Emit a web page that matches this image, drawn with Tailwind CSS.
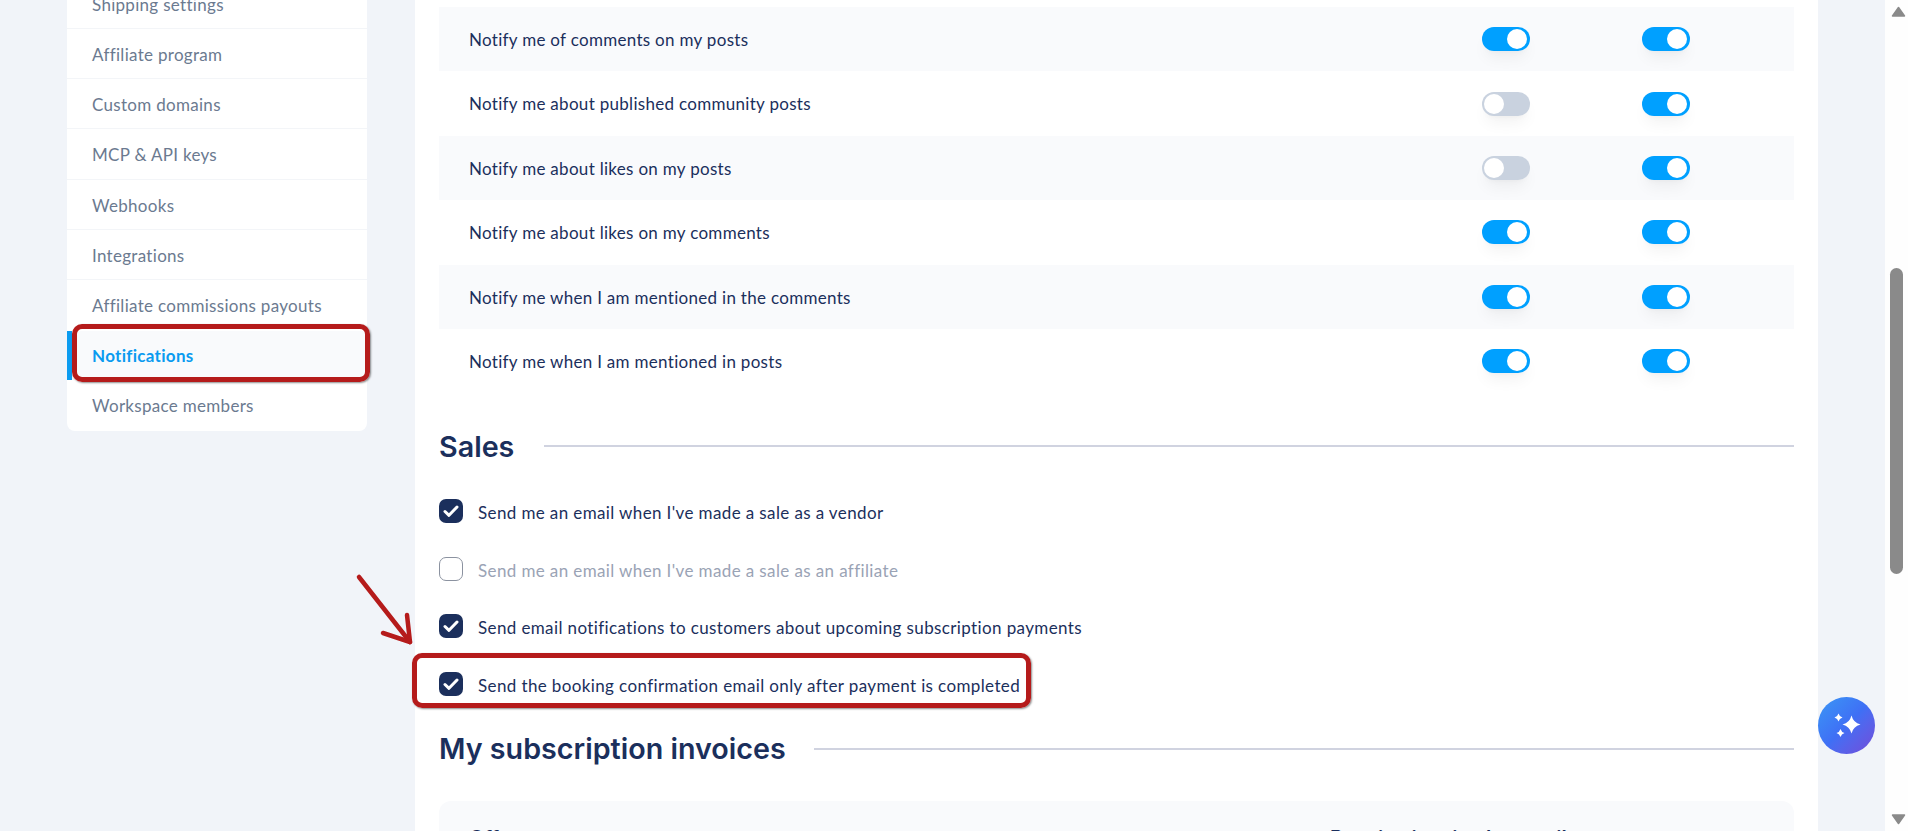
<!DOCTYPE html>
<html lang="en">

<head>
  <meta charset="UTF-8" />
  <title>Notifications</title>
  <script src="https://cdn.jsdelivr.net/npm/@tailwindcss/browser@4"></script>
</head>

<body class="h-screen overflow-hidden flex bg-[#f1f4f9] text-[#1b2f5c] font-['Lato',sans-serif] text-[17px] tracking-[0.3px]">
  <div class="relative flex-1 flex h-[831px] overflow-hidden">

    <!-- sidebar -->
    <aside class="w-[300px] ml-[67px] mt-[-21px] h-[452px] bg-white rounded-b-lg text-[#6b7a90] shrink-0 flex flex-col">
      <div class="h-[50px] flex items-center pl-[25px] pt-[2px] border-b border-[#f3f5f8]">Shipping settings</div>
      <div class="h-[50px] flex items-center pl-[25px] pt-[2px] border-b border-[#f3f5f8]">Affiliate program</div>
      <div class="h-[50px] flex items-center pl-[25px] pt-[2px] border-b border-[#f3f5f8]">Custom domains</div>
      <div class="h-[51px] flex items-center pl-[25px] pt-px border-b border-[#f3f5f8]">MCP &amp; API keys</div>
      <div class="h-[50px] flex items-center pl-[25px] pt-[2px] border-b border-[#f3f5f8]">Webhooks</div>
      <div class="h-[50px] flex items-center pl-[25px] pt-[2px] border-b border-[#f3f5f8]">Integrations</div>
      <div class="h-[51px] flex items-center pl-[25px]">Affiliate commissions payouts</div>
      <div class="h-[49px] flex items-center pl-[20px] border-l-[5px] border-[#0a9bf0] bg-[#f9fafc] text-[#0a9bf0] font-bold">Notifications</div>
      <div class="h-[51px] flex items-center pl-[25px]">Workspace members</div>
    </aside>

    <!-- main panel -->
    <main class="w-[1403px] ml-[48px] bg-white px-[24px] pt-[7px] shrink-0">
      <div>
        <div class="h-[64.4px] flex items-center bg-[#f9fafc] pl-[30px]">
          <span class="w-[1013px] pt-px">Notify me of comments on my posts</span>
          <span class="w-[48px] h-[24px] rounded-full bg-[#00a0ff] flex items-center justify-end pr-[3px] shadow-lg shadow-black/5"><i class="w-[20px] h-[20px] rounded-full bg-white"></i></span>
          <span class="w-[48px] h-[24px] ml-[112px] rounded-full bg-[#00a0ff] flex items-center justify-end pr-[3px] shadow-lg shadow-black/5"><i class="w-[20px] h-[20px] rounded-full bg-white"></i></span>
        </div>
        <div class="h-[64.4px] flex items-center pl-[30px]">
          <span class="w-[1013px] pt-px">Notify me about published community posts</span>
          <span class="w-[48px] h-[24px] rounded-full bg-[#c9d2df] flex items-center pl-[2px] shadow-lg shadow-black/5"><i class="w-[20px] h-[20px] rounded-full bg-white"></i></span>
          <span class="w-[48px] h-[24px] ml-[112px] rounded-full bg-[#00a0ff] flex items-center justify-end pr-[3px] shadow-lg shadow-black/5"><i class="w-[20px] h-[20px] rounded-full bg-white"></i></span>
        </div>
        <div class="h-[64.4px] flex items-center bg-[#f9fafc] pl-[30px]">
          <span class="w-[1013px] pt-px">Notify me about likes on my posts</span>
          <span class="w-[48px] h-[24px] rounded-full bg-[#c9d2df] flex items-center pl-[2px] shadow-lg shadow-black/5"><i class="w-[20px] h-[20px] rounded-full bg-white"></i></span>
          <span class="w-[48px] h-[24px] ml-[112px] rounded-full bg-[#00a0ff] flex items-center justify-end pr-[3px] shadow-lg shadow-black/5"><i class="w-[20px] h-[20px] rounded-full bg-white"></i></span>
        </div>
        <div class="h-[64.4px] flex items-center pl-[30px]">
          <span class="w-[1013px] pt-px">Notify me about likes on my comments</span>
          <span class="w-[48px] h-[24px] rounded-full bg-[#00a0ff] flex items-center justify-end pr-[3px] shadow-lg shadow-black/5"><i class="w-[20px] h-[20px] rounded-full bg-white"></i></span>
          <span class="w-[48px] h-[24px] ml-[112px] rounded-full bg-[#00a0ff] flex items-center justify-end pr-[3px] shadow-lg shadow-black/5"><i class="w-[20px] h-[20px] rounded-full bg-white"></i></span>
        </div>
        <div class="h-[64.4px] flex items-center bg-[#f9fafc] pl-[30px]">
          <span class="w-[1013px] pt-px">Notify me when I am mentioned in the comments</span>
          <span class="w-[48px] h-[24px] rounded-full bg-[#00a0ff] flex items-center justify-end pr-[3px] shadow-lg shadow-black/5"><i class="w-[20px] h-[20px] rounded-full bg-white"></i></span>
          <span class="w-[48px] h-[24px] ml-[112px] rounded-full bg-[#00a0ff] flex items-center justify-end pr-[3px] shadow-lg shadow-black/5"><i class="w-[20px] h-[20px] rounded-full bg-white"></i></span>
        </div>
        <div class="h-[64.4px] flex items-center pl-[30px]">
          <span class="w-[1013px] pt-px">Notify me when I am mentioned in posts</span>
          <span class="w-[48px] h-[24px] rounded-full bg-[#00a0ff] flex items-center justify-end pr-[3px] shadow-lg shadow-black/5"><i class="w-[20px] h-[20px] rounded-full bg-white"></i></span>
          <span class="w-[48px] h-[24px] ml-[112px] rounded-full bg-[#00a0ff] flex items-center justify-end pr-[3px] shadow-lg shadow-black/5"><i class="w-[20px] h-[20px] rounded-full bg-white"></i></span>
        </div>
      </div>

      <!-- Sales -->
      <div class="flex items-center gap-[30px] mt-[31px] h-[44px]">
        <h2 class="text-[28.7px] tracking-normal font-semibold font-['Inter',sans-serif]">Sales</h2>
        <div class="flex-1 h-[2px] bg-[#d0d3e0]"></div>
      </div>
      <div class="mt-[31px] flex flex-col tracking-[0.38px]">
        <label class="h-[24px] flex items-center gap-[15px]">
          <span class="w-[24px] h-[24px] rounded-[7px] bg-[#1b2f5c] flex items-center justify-center"><svg class="w-[16px] h-[16px]" viewBox="0 0 16 16" fill="none" stroke="#fff" stroke-width="3" stroke-linecap="round" stroke-linejoin="round"><path d="M2 8.500l4 3.800 8-8.300"/></svg></span>
          <span class="pt-[2px]">Send me an email when I've made a sale as a vendor</span>
        </label>
        <label class="h-[24px] mt-[34px] flex items-center gap-[15px] text-[#9aa3b5]">
          <span class="w-[24px] h-[24px] rounded-[7px] bg-white border border-[#8b92a0]"></span>
          <span class="pt-[2px]">Send me an email when I've made a sale as an affiliate</span>
        </label>
        <label class="h-[24px] mt-[33px] flex items-center gap-[15px]">
          <span class="w-[24px] h-[24px] rounded-[7px] bg-[#1b2f5c] flex items-center justify-center"><svg class="w-[16px] h-[16px]" viewBox="0 0 16 16" fill="none" stroke="#fff" stroke-width="3" stroke-linecap="round" stroke-linejoin="round"><path d="M2 8.500l4 3.800 8-8.300"/></svg></span>
          <span class="pt-[2px]">Send email notifications to customers about upcoming subscription payments</span>
        </label>
        <label class="h-[24px] mt-[34px] flex items-center gap-[15px]">
          <span class="w-[24px] h-[24px] rounded-[7px] bg-[#1b2f5c] flex items-center justify-center"><svg class="w-[16px] h-[16px]" viewBox="0 0 16 16" fill="none" stroke="#fff" stroke-width="3" stroke-linecap="round" stroke-linejoin="round"><path d="M2 8.500l4 3.800 8-8.300"/></svg></span>
          <span class="pt-[2px]">Send the booking confirmation email only after payment is completed</span>
        </label>
      </div>

      <!-- My subscription invoices -->
      <div class="flex items-center gap-[28px] mt-[31px] h-[44px]">
        <h2 class="text-[28.7px] tracking-normal font-semibold font-['Inter',sans-serif] pb-[2px]">My subscription invoices</h2>
        <div class="flex-1 h-[2px] bg-[#d0d3e0]"></div>
      </div>
      <div class="mt-[30px] h-[80px] rounded-t-xl bg-[#f9fafc] flex pt-[22px] pl-[30px] font-semibold text-[20px] tracking-normal font-['Inter',sans-serif]">
        <span class="w-[861px]">Offer</span>
        <span>Receive invoice by email</span>
      </div>
    </main>

    <!-- chat bubble -->
    <button class="absolute left-[1818px] top-[697px] w-[57px] h-[57px] rounded-full bg-gradient-to-br from-[#3b97f5] via-[#3f6ff5] to-[#6f4bd8] flex items-center justify-center">
      <svg class="w-[32px] h-[32px]" viewBox="0 0 32 32" fill="#fff">
        <path d="M20.500 5.500Q22.300 12.700 29.500 14.500 22.300 16.300 20.500 23.500 18.700 16.300 11.500 14.500 18.700 12.700 20.500 5.500z"/>
        <path d="M7.500 3.500Q8.400 6.600 11.500 7.500 8.400 8.400 7.500 11.500 6.600 8.400 3.500 7.500 6.600 6.600 7.500 3.500z"/>
        <path d="M9.500 19Q10.400 22.100 13.500 23 10.400 23.900 9.500 27 8.600 23.900 5.500 23 8.600 22.100 9.500 19z"/>
      </svg>
    </button>

    <!-- annotations drawn on the screenshot -->
    <div class="absolute left-[72px] top-[324px] w-[298px] h-[58px] rounded-[10px] border-[5px] border-[#b51b1b] shadow-[1px_1px_2px_rgba(0,0,0,0.45)]"></div>
    <div class="absolute left-[412px] top-[653px] w-[619px] h-[55px] rounded-[10px] border-[5px] border-[#b51b1b] shadow-[1px_1px_2px_rgba(0,0,0,0.45)]"></div>
    <svg class="absolute left-[350px] top-[570px] w-[70px] h-[82px]" viewBox="0 0 70 82" fill="none" stroke="#b51b1b" stroke-width="4.500" stroke-linecap="round" stroke-linejoin="round">
      <path d="M9 7l51 65"/>
      <path d="M33 63l27 9-3-27"/>
    </svg>
  </div>

  <!-- browser scrollbar -->
  <div class="w-[23px] bg-[#fefefe] shrink-0 flex flex-col items-center justify-between h-[831px] relative">
    <svg class="w-[15px] h-[11px] mt-[6px] ml-[4px]" viewBox="0 0 15 11" fill="#8a8a8a" stroke="#8a8a8a" stroke-width="1.500" stroke-linejoin="round"><path d="M7.500 1.500l6 8.500h-12z"/></svg>
    <div class="absolute top-[268px] left-[5px] w-[13px] h-[306px] rounded-full bg-[#8a8a8a]"></div>
    <svg class="w-[15px] h-[11px] mb-[6px] ml-[4px]" viewBox="0 0 15 11" fill="#8a8a8a" stroke="#8a8a8a" stroke-width="1.500" stroke-linejoin="round"><path d="M1.500 1h12l-6 8.500z"/></svg>
  </div>
</body>

</html>
